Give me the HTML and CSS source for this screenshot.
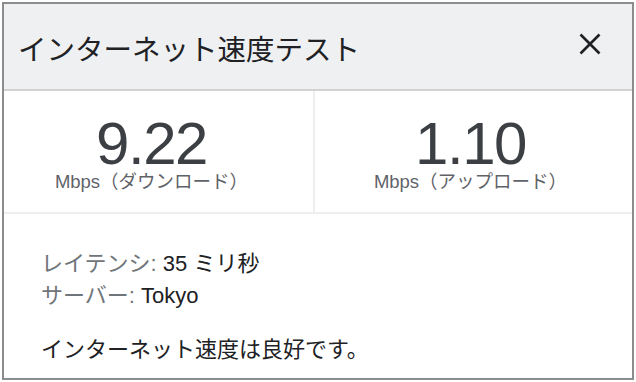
FILE: index.html
```html
<!DOCTYPE html>
<html lang="ja">
  <head>
    <meta charset="UTF-8" />
    <title>インターネット速度テスト</title>
    <link rel="stylesheet" href="styles.css">
  </head>
  <body>
    <div class="dialog">
      <div class="dialog-head">
        <h2 class="dialog-title">インターネット速度テスト</h2>
        <button class="close-btn" aria-label="閉じる">
          <svg width="24" height="24" viewBox="0 0 24 24">
            <path d="M2.5 2.5 L21.5 21.5 M21.5 2.5 L2.5 21.5" stroke="#202124" stroke-width="2.6" fill="none" />
          </svg>
        </button>
      </div>
      <div class="stats">
        <div class="stat stat-down">
          <div class="stat-num">9.22</div>
          <div class="stat-unit">Mbps（ダウンロード）</div>
        </div>
        <div class="stat stat-up">
          <div class="stat-num">1.10</div>
          <div class="stat-unit">Mbps（アップロード）</div>
        </div>
      </div>
      <div class="details">
        <div class="row"><span class="label">レイテンシ:</span> 35 ミリ秒</div>
        <div class="row"><span class="label">サーバー:</span> Tokyo</div>
        <p class="verdict">インターネット速度は良好です。</p>
      </div>
    </div>
  </body>
</html>
```

FILE: styles.css
```css
body {
  margin: 0;
  padding: 2px;
  background: #ffffff;
  font-family: "Liberation Sans", "Noto Sans CJK JP", sans-serif;
}

.dialog {
  width: 628px;
  height: 374px;
  border: 2px solid #8c8c8c;
  background: #fff;
  display: flex;
  flex-direction: column;
}

.dialog-head {
  height: 85px;
  background: #eff0f2;
  border-bottom: 2px solid #d2d2d2;
  display: flex;
  align-items: center;
  justify-content: space-between;
  padding: 0 30px 0 14px;
}

.dialog-title {
  margin: 0 0 -2px;
  font-size: 28.5px;
  font-weight: 400;
  color: #202124;
  font-family: "Noto Sans CJK JP", sans-serif;
}

.close-btn {
  background: none;
  border: none;
  padding: 0;
  width: 24px;
  height: 24px;
  margin-top: -6px;
}

.stats {
  display: flex;
  height: 121px;
  border-bottom: 2px solid #eeeeee;
}

.stat {
  box-sizing: border-box;
  display: flex;
  flex-direction: column;
  align-items: center;
  padding-top: 29px;
}

.stat-down {
  width: 309px;
  padding-right: 14px;
}

.stat-up {
  flex: 1;
  border-left: 2px solid #eeeeee;
  padding-right: 6px;
}

.stat-num {
  font-size: 60px;
  line-height: 48px;
  letter-spacing: -1.5px;
  color: #3c3f43;
}

.stat-unit {
  margin-top: 3px;
  font-size: 18.5px;
  line-height: 22px;
  color: #5f6368;
}

.details {
  padding: 34px 36px 0 37px;
  font-size: 22px;
  color: #202124;
}

.row {
  line-height: 32px;
}

.label {
  color: #70757a;
}

.verdict {
  margin: 22px 0 0;
  line-height: 32px;
}
```
